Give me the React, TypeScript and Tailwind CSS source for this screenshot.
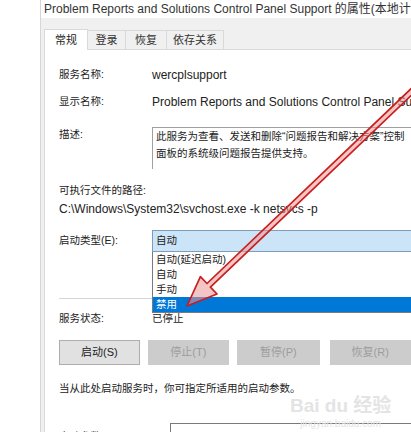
import React from "react"

const tabs = [
  { name: "常规", w: "w-[44px]", active: true },
  { name: "登录", w: "w-[38px]", active: false },
  { name: "恢复", w: "w-[41px]", active: false },
  { name: "依存关系", w: "w-[57px]", active: false },
]

const options = ["自动(延迟启动)", "自动", "手动", "禁用"]

function Arrow() {
  // hollow red arrow drawn over the dialog
  return (
    <svg className="absolute inset-0 z-30 pointer-events-none" width="411" height="432" viewBox="0 0 411 432">
      <polygon
        points="187,306 217,294 210.4,287.1 431.7,75.8 428.3,72.2 207,283.5 200.4,276.6"
        fill="rgba(235,150,150,0.55)"
        stroke="#c81e1e"
        strokeWidth="1.7"
        strokeLinejoin="round"
      />
    </svg>
  )
}

export default function App() {
  return (
    <div className="relative w-[411px] h-[432px] overflow-hidden bg-white text-[10.5px] text-[#222] font-[Liberation_Sans,Noto_Sans_CJK_SC,sans-serif]">
      <div className="ml-[40px] h-full flex flex-col border-l border-[#d6d6d6]">
        {/* title bar */}
        <div className="h-[20px] flex items-center pl-[3px] text-[12px] text-[#333] whitespace-nowrap bg-white">
          Problem Reports and Solutions Control Panel Support 的属性(本地计算机)
        </div>

        <div className="flex-1 bg-[#f0f0f0] pt-[10px] pl-[3px] flex flex-col">
          {/* tabs */}
          <div className="flex items-end h-[21px] text-[11px]">
            {tabs.map((t) =>
              t.active ? (
                <div
                  key={t.name}
                  className={`${t.w} h-[21px] bg-white border border-b-0 border-[#d9d9d9] flex items-center justify-center relative top-px z-10`}
                >
                  {t.name}
                </div>
              ) : (
                <div
                  key={t.name}
                  className={`${t.w} h-[19px] bg-[#f0f0f0] border border-l-0 border-b-0 border-[#d9d9d9] flex items-center justify-center text-[#333]`}
                >
                  {t.name}
                </div>
              )
            )}
          </div>

          {/* panel */}
          <div className="flex-1 bg-white border-l border-t border-[#d9d9d9] pl-[14px] pt-[15px] flex flex-col">
            <div className="h-[20px] flex items-center">
              <div className="w-[93px]">服务名称:</div>
              <div className="text-[12px]">wercplsupport</div>
            </div>
            <div className="h-[20px] flex items-center mt-[7px] whitespace-nowrap">
              <div className="w-[93px] shrink-0">显示名称:</div>
              <div className="text-[12px]">Problem Reports and Solutions Control Panel Support</div>
            </div>
            <div className="flex mt-[15px]">
              <div className="w-[93px] shrink-0 leading-[17px] -mt-[1px]">描述:</div>
              <div className="flex-1 h-[42px] border-l border-t border-[#a0a0a0] pl-[3px] leading-[17px] whitespace-nowrap overflow-hidden">
                <div>此服务为查看、发送和删除“问题报告和解决方案”控制</div>
                <div>面板的系统级问题报告提供支持。</div>
              </div>
            </div>
            <div className="h-[18px] flex items-center mt-[13px]">可执行文件的路径:</div>
            <div className="h-[18px] flex items-center whitespace-nowrap text-[12px]">
              C:\Windows\System32\svchost.exe -k netsvcs -p
            </div>

            {/* startup type */}
            <div className="flex items-center mt-[12px] h-[22px]">
              <div className="w-[93px] shrink-0">启动类型(E):</div>
              <div className="relative flex-1 h-[22px]">
                <div className="h-[22px] bg-[#cce4f7] border border-[#7f9db9] border-r-0 flex items-center pl-[3px]">
                  自动
                </div>
                <div className="absolute left-0 right-0 top-[22px] z-20 bg-white border border-r-0 border-t-0 border-[#7a7a7a] flex flex-col">
                  {options.map((o, i) => (
                    <div
                      key={o}
                      className={
                        i === options.length - 1
                          ? "h-[15px] flex items-center pl-[3px] bg-[#0078d7] text-white"
                          : "h-[15px] flex items-center pl-[3px]"
                      }
                    >
                      {o}
                    </div>
                  ))}
                </div>
              </div>
            </div>

            <div className="h-px bg-[#d5d5d5] mt-[46px]" />

            <div className="h-[20px] flex items-center mt-[10px]">
              <div className="w-[93px]">服务状态:</div>
              <div>已停止</div>
            </div>

            {/* buttons */}
            <div className="flex gap-[8px] mt-[11px] whitespace-nowrap text-[11px]">
              <div className="w-[85px] h-[25px] bg-[#e1e1e1] border border-[#adadad] flex items-center justify-center">
                启动(S)
              </div>
              <div className="w-[86px] h-[25px] bg-[#cccccc] flex items-center justify-center text-[#9d9d9d]">
                停止(T)
              </div>
              <div className="w-[87px] h-[25px] bg-[#cccccc] flex items-center justify-center text-[#9d9d9d]">
                暂停(P)
              </div>
              <div className="w-[86px] h-[25px] ml-[2px] bg-[#cccccc] flex items-center justify-center text-[#9d9d9d]">
                恢复(R)
              </div>
            </div>

            <div className="h-[18px] flex items-center mt-[15px] whitespace-nowrap">当从此处启动服务时，你可指定所适用的启动参数。</div>

            <div className="flex mt-[25px] whitespace-nowrap">
              <div className="w-[111px] shrink-0 pt-[6px]">启动参数(M):</div>
              <div className="flex-1 h-[24px] border border-r-0 border-[#7a7a7a]" />
            </div>
          </div>
        </div>
      </div>

      {/* baidu watermark */}
      <div className="absolute left-[290px] top-[396px] flex flex-col items-center text-[#e4e4e4] leading-none pointer-events-none whitespace-nowrap">
        <div className="text-[19px] font-bold">Bai du 经验</div>
        <div className="text-[10px] mt-[4px]">jingyan.baidu.com</div>
      </div>

      <Arrow />
    </div>
  )
}
